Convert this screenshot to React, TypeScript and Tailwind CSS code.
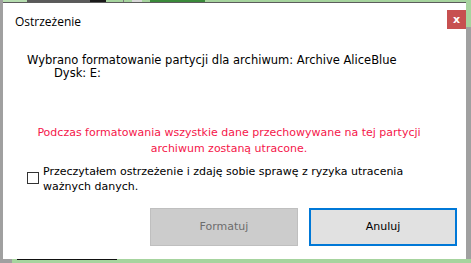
import React from 'react';

const App: React.FC = () => {
  return (
    <div className="w-[471px] h-[263px] bg-[#a6d49e] flex flex-col overflow-hidden" style={{ fontFamily: '"DejaVu Sans", Verdana, sans-serif' }}>
      {/* background app peeking above the dialog */}
      <div className="h-[2px] flex shrink-0">
        <div className="w-[3px] bg-[#a0a0a0]" />
        <div className="w-[24px] bg-[#b6ddb0]" />
        <div className="w-[63px] bg-[#5a5a5a]" />
        <div className="w-[16px] bg-[#1a1a1a]" />
        <div className="w-[17px] bg-[#a6d49e]" />
        <div className="w-[1px] bg-[#7a7a7a]" />
        <div className="w-[8px] bg-[#a6d49e]" />
        <div className="w-[10px] bg-[#d8d8d8]" />
        <div className="w-[8px] bg-[#a6d49e]" />
        <div className="w-[55px] bg-[#3a8a3a]" />
        <div className="flex-1 bg-[#a6d49e]" />
      </div>

      <div className="flex h-[257px] shrink-0">
        <div className="w-[3px] bg-[#a0a0a0] shrink-0" />

        {/* dialog */}
        <div className="w-[463px] bg-white border-t border-[#5c5c5c] flex flex-col shrink-0">
          <div className="flex items-start justify-between pl-[12px] pt-[7px]">
            <span className="text-[12px] text-black leading-[16px] mt-[4px]" style={{ fontFamily: '"Open Sans", "Noto Sans", sans-serif' }}>Ostrzeżenie</span>
            <button className="w-[19px] h-[19px] bg-[#c75050] text-white text-[11px] font-bold leading-none flex items-center justify-center">x</button>
          </div>

          <div className="pl-[24px] pt-[24px] text-[11.5px] leading-[13px] text-black">
            <div>Wybrano formatowanie partycji dla archiwum: Archive AliceBlue</div>
            <div className="pl-[27px]">Dysk: E:</div>
          </div>

          <div className="pt-[45px] pr-[11px] text-center text-[11px] leading-[16px] text-[#f5164a]">
            <div>Podczas formatowania wszystkie dane przechowywane na tej partycji</div>
            <div>archiwum zostaną utracone.</div>
          </div>

          <div className="flex items-start pl-[24px] pt-[7px]">
            <div className="w-[12px] h-[12px] border border-[#333333] bg-white mt-[8px] shrink-0" />
            <div className="pl-[4px] text-[11px] leading-[15px] text-black">
              Przeczytałem ostrzeżenie i zdaję sobie sprawę z ryzyka utracenia<br />ważnych danych.
            </div>
          </div>

          <div className="flex justify-end gap-[11px] pr-[9px] pt-[14px]">
            <button className="w-[148px] h-[38px] bg-[#cccccc] border border-[#bfbfbf] text-[11px] text-[#6d6d6d]">Formatuj</button>
            <button className="w-[148px] h-[38px] bg-[#e1e1e1] border-2 border-[#0078d7] text-[11px] text-black">Anuluj</button>
          </div>
        </div>

        <div className="flex-1 flex flex-col">
          <div className="h-[25px] bg-[#a6d49e]" />
          <div className="flex-1 bg-[#a0a0a0]" />
        </div>
      </div>

      <div className="flex-1 flex">
        <div className="w-[12px] bg-[#a0a0a0]" />
        <div className="w-[5px] bg-[#a6d49e]" />
        <div className="w-[100px] h-[1px] bg-[#111111]" />
        <div className="flex-1 bg-[#a6d49e]" />
      </div>
    </div>
  );
};

export default App;
